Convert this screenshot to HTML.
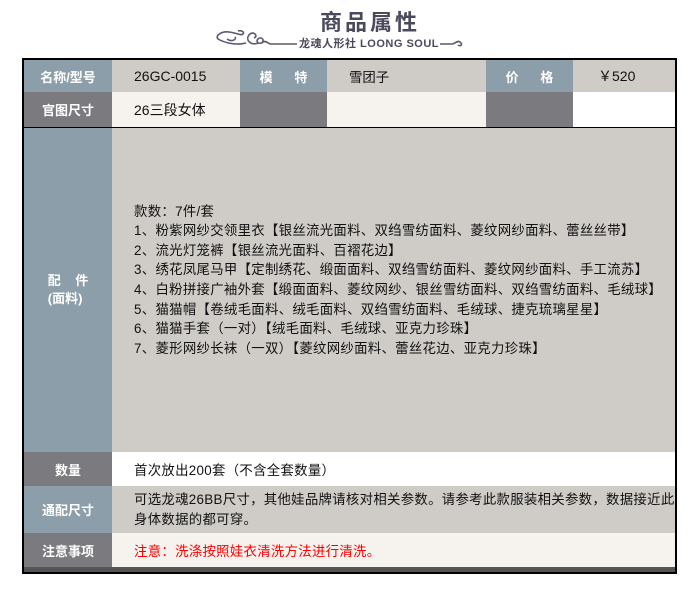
<!DOCTYPE html>
<html><head><meta charset="utf-8"><style>
*{margin:0;padding:0;box-sizing:border-box}
body{width:700px;height:592px;background:#fff;position:relative;overflow:hidden;font-family:"Liberation Sans","Noto Sans CJK SC",sans-serif}
.c{position:absolute;display:flex;align-items:center;font-size:13.4px;color:#111}
.l{justify-content:center;color:#fff;font-weight:bold;font-size:13px}
.b{background:#8c9ea9}.d{background:#7b7b7f}.g{background:#cfccc7}.cr{background:#f6f3ef}.w{background:#fff}
.v{padding-left:22px}
</style></head><body>
<div style="position:absolute;left:0;top:5px;width:740px;text-align:center;font-size:22px;font-weight:bold;color:#4b4a5c;letter-spacing:3px">商品属性</div>
<div style="position:absolute;left:299px;top:35px;font-size:11px;color:#4b4a5c;font-weight:bold;letter-spacing:0.5px">龙魂人形社 LOONG SOUL</div>
<svg style="position:absolute;left:213px;top:26px" width="85" height="22" viewBox="0 0 85 22" fill="none" stroke="#5a5a6e" stroke-width="1.6">
<path d="M84 18 H58 C55 18 53 14 50 16 C47 19 42 16 45 13 C48 10 52 14 49 16"/>
<path d="M45 17 C38 20 32 14 36 9 C40 4 46 10 41 12"/>
<path d="M33 17 C22 20 10 16 5 13 C2 10 8 5 16 6 C24 7 28 10 30 8 C32 6 28 4 25 5"/>
<path d="M14 13 C18 16 24 14 22 11"/>
</svg>
<svg style="position:absolute;left:440px;top:36px" width="30" height="12" viewBox="0 0 30 12" fill="none" stroke="#5a5a6e" stroke-width="1.6">
<path d="M0 8 H12 C15 8 17 4 20 6 C23 8 21 11 18 9"/>
</svg>
<div style="position:absolute;left:22px;top:58px;width:655px;height:516px;border:2px solid #000;background:#000"></div>
<div class="c l b" style="left:24px;top:60px;width:88px;height:32px">名称/型号</div>
<div class="c g v" style="left:112px;top:60px;width:128px;height:32px;font-size:14px">26GC-0015</div>
<div class="c l b" style="left:240px;top:60px;width:87px;height:32px">模&nbsp;&nbsp;&nbsp;&nbsp;&nbsp;&nbsp;特</div>
<div class="c g v" style="left:327px;top:60px;width:159px;height:32px;padding-left:22px">雪团子</div>
<div class="c l b" style="left:486px;top:60px;width:87px;height:32px">价&nbsp;&nbsp;&nbsp;&nbsp;&nbsp;&nbsp;格</div>
<div class="c g" style="left:573px;top:60px;width:102px;height:32px;padding-left:25px;font-size:14px">￥520</div>
<div class="c l d" style="left:24px;top:92px;width:88px;height:35px">官图尺寸</div>
<div class="c cr v" style="left:112px;top:92px;width:128px;height:35px;font-size:14px">26三段女体</div>
<div class="c d" style="left:240px;top:92px;width:87px;height:35px"></div>
<div class="c cr" style="left:327px;top:92px;width:159px;height:35px"></div>
<div class="c d" style="left:486px;top:92px;width:87px;height:35px"></div>
<div class="c w" style="left:573px;top:92px;width:102px;height:35px"></div>
<div class="c l b" style="left:24px;top:128px;width:88px;height:324px;flex-direction:column;justify-content:center;line-height:18px">配&nbsp;&nbsp;&nbsp;&nbsp;件<br>(面料)</div>
<div class="c g" style="left:112px;top:128px;width:563px;height:324px;padding-left:22px;padding-bottom:20px;line-height:19.6px;white-space:nowrap;letter-spacing:0.3px">
<div>款数：7件/套<br>1、粉紫网纱交领里衣【银丝流光面料、双绉雪纺面料、菱纹网纱面料、蕾丝丝带】<br>2、流光灯笼裤【银丝流光面料、百褶花边】<br>3、绣花凤尾马甲【定制绣花、缎面面料、双绉雪纺面料、菱纹网纱面料、手工流苏】<br>4、白粉拼接广袖外套【缎面面料、菱纹网纱、银丝雪纺面料、双绉雪纺面料、毛绒球】<br>5、猫猫帽【卷绒毛面料、绒毛面料、双绉雪纺面料、毛绒球、捷克琉璃星星】<br>6、猫猫手套（一对）【绒毛面料、毛绒球、亚克力珍珠】<br>7、菱形网纱长袜（一双）【菱纹网纱面料、蕾丝花边、亚克力珍珠】</div></div>
<div class="c l d" style="left:24px;top:452px;width:88px;height:34px">数量</div>
<div class="c w v" style="left:112px;top:452px;width:563px;height:34px;letter-spacing:0.3px">首次放出200套（不含全套数量）</div>
<div class="c l b" style="left:24px;top:486px;width:88px;height:47px">通配尺寸</div>
<div class="c g v" style="left:112px;top:486px;width:563px;height:47px;line-height:20px;white-space:nowrap;letter-spacing:0.3px;overflow:hidden"><div>可选龙魂26BB尺寸，其他娃品牌请核对相关参数。请参考此款服装相关参数，数据接近此<br>身体数据的都可穿。</div></div>
<div class="c l d" style="left:24px;top:533px;width:88px;height:34px">注意事项</div>
<div class="c cr v" style="left:112px;top:533px;width:563px;height:34px;color:#f00;letter-spacing:0.3px">注意：洗涤按照娃衣清洗方法进行清洗。</div>
<div style="position:absolute;left:24px;top:567px;width:651px;height:5px;background:#555"></div>
</body></html>
